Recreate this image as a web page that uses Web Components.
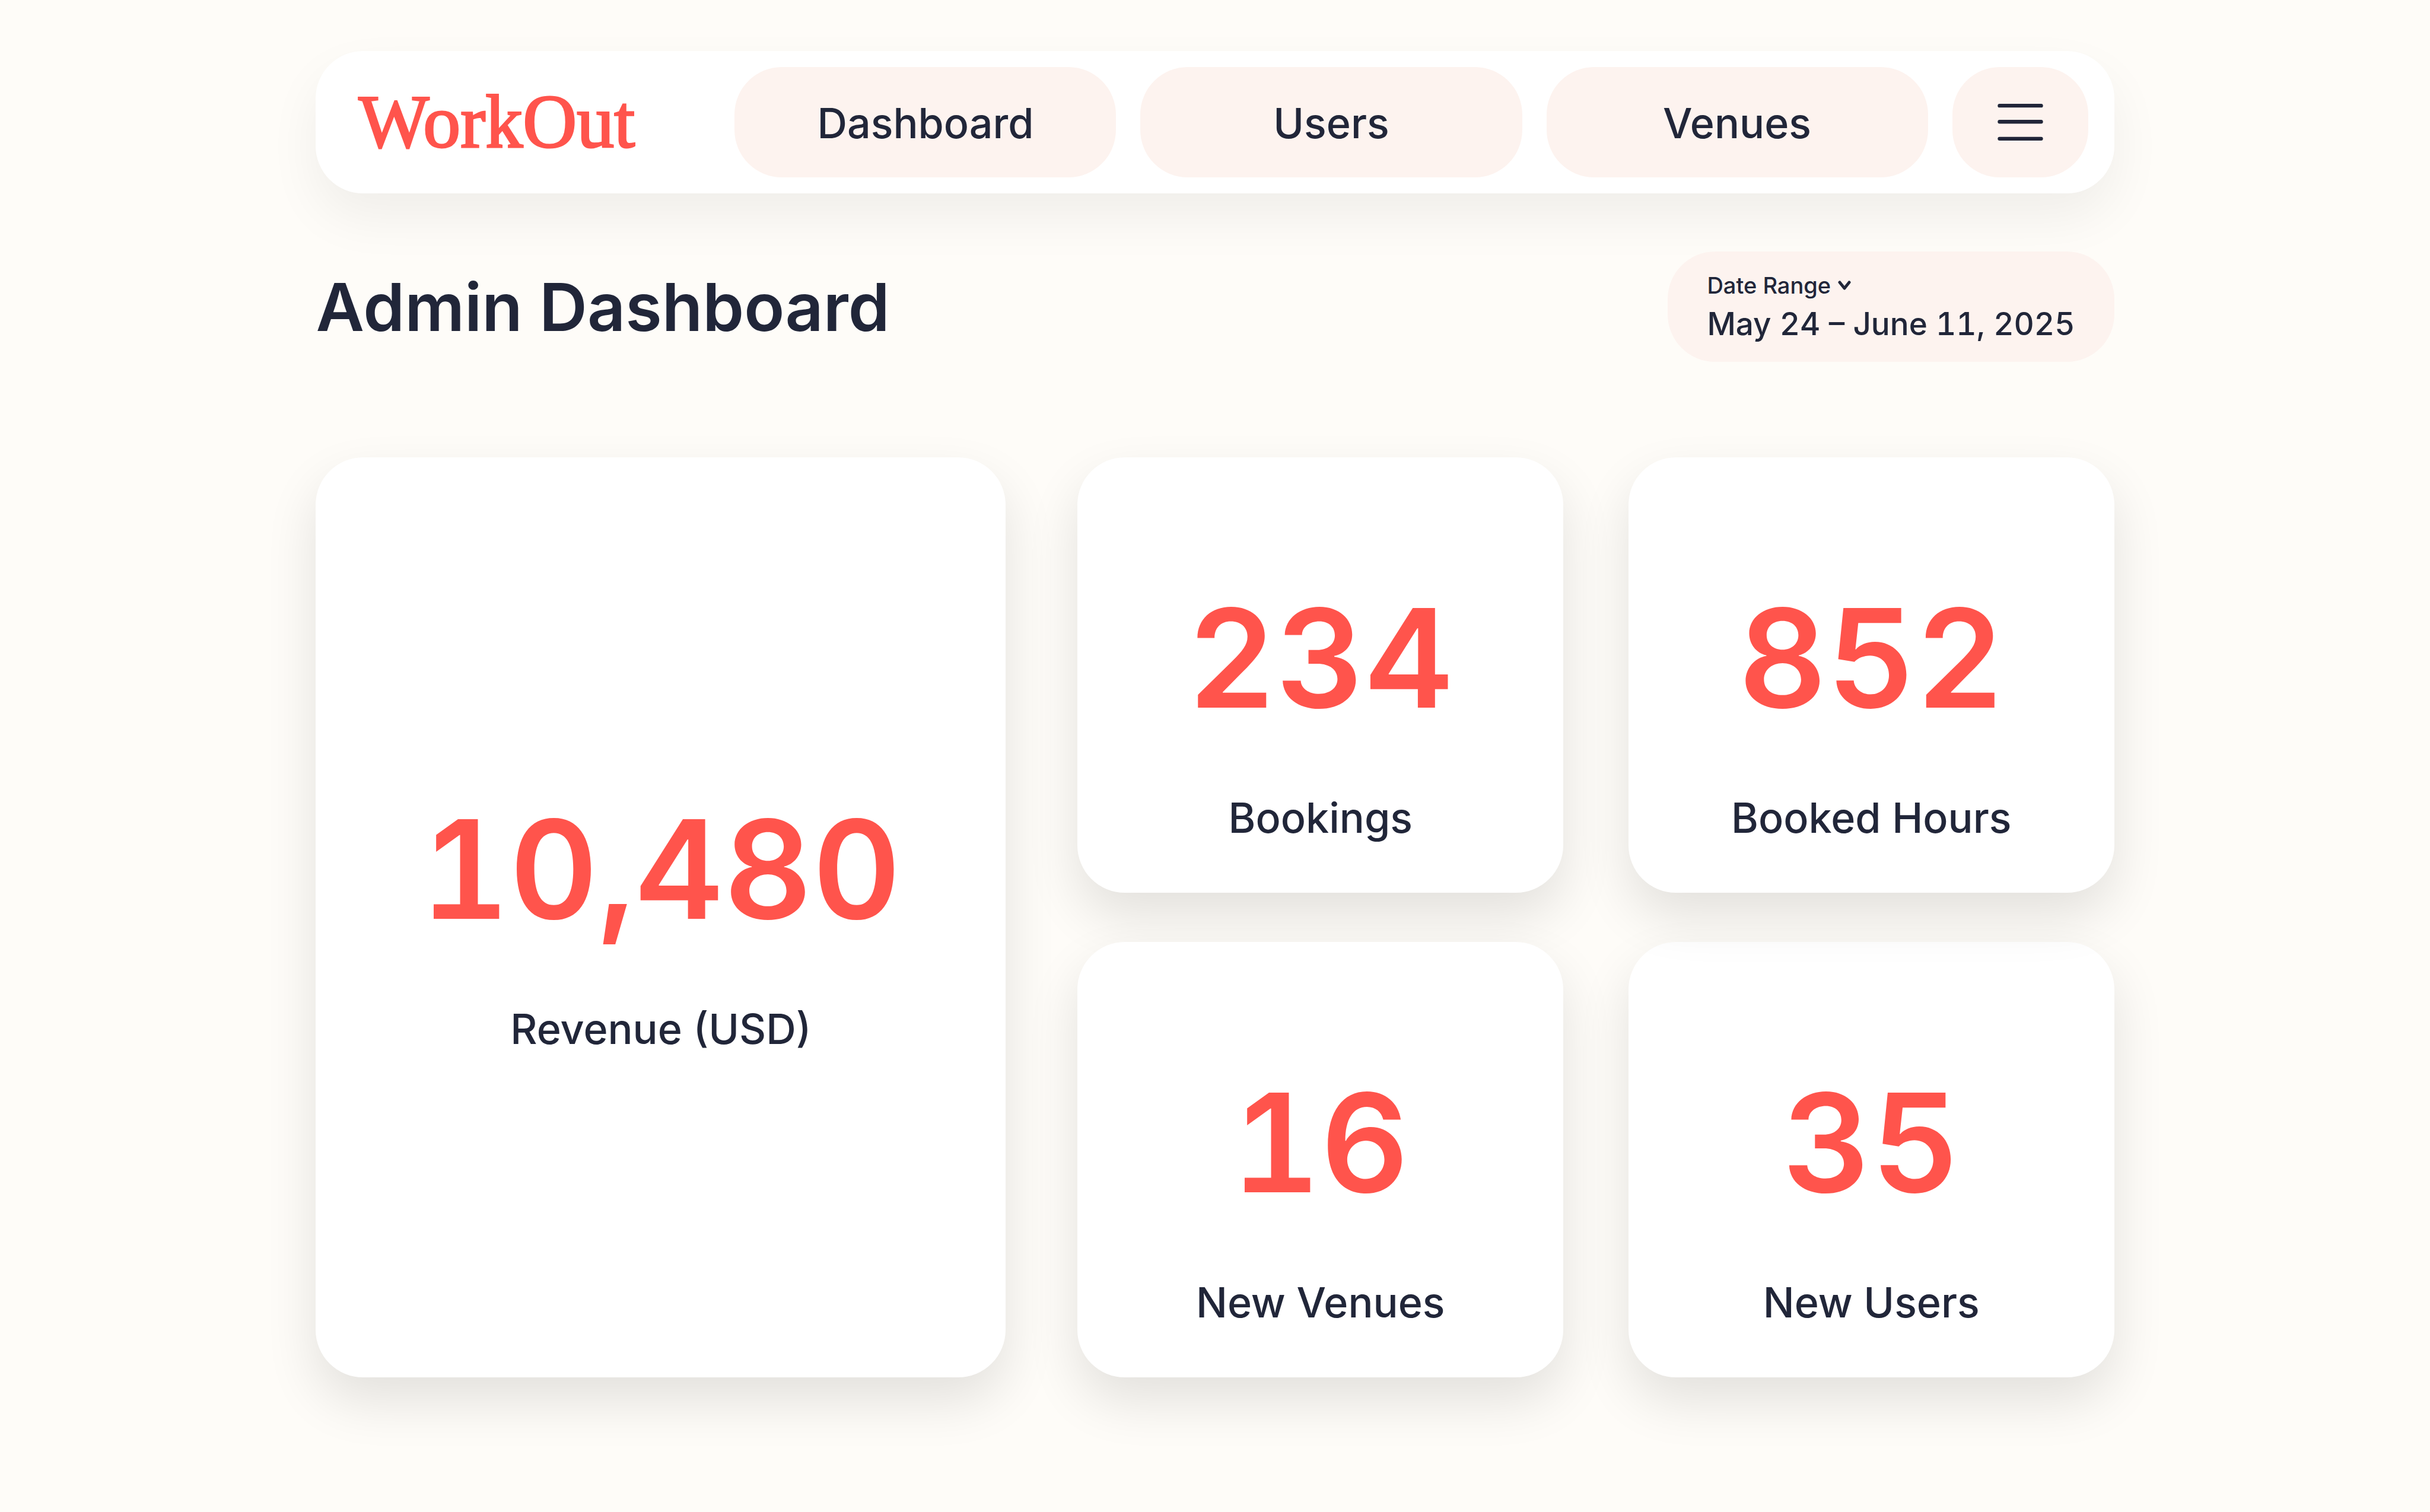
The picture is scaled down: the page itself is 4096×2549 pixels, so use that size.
<!DOCTYPE html>
<html lang="en">
<head>
<meta charset="utf-8">
<meta name="viewport" content="width=device-width, initial-scale=1">
<title>WorkOut – Admin Dashboard</title>
<style>
  :root {
    --page: #fefcf8;
    --surface: #ffffff;
    --tint: #fdf3ef;
    --ink: #212639;
    --accent: #ff544c;
    --radius: 80px;
  }
  body {
    margin: 0;
    background: var(--page);
    color: var(--ink);
    font-family: Inter, "Liberation Sans", sans-serif;
    font-weight: 500;
  }
</style>
</head>
<body>
<admin-page>
  <site-header slot="header">
    <nav-pill href="#dashboard">Dashboard</nav-pill>
    <nav-pill href="#users">Users</nav-pill>
    <nav-pill href="#venues">Venues</nav-pill>
  </site-header>
  <page-heading slot="heading">
    Admin Dashboard
    <date-range slot="tools" label="Date Range">May 24 – June 11, 2025</date-range>
  </page-heading>
  <stat-card large value="10,480">Revenue (USD)</stat-card>
  <stat-card slot="grid" column="1" row="1" value="234">Bookings</stat-card>
  <stat-card slot="grid" column="1" row="2" value="16">New Venues</stat-card>
  <stat-card slot="grid" column="2" row="2" value="35">New Users</stat-card>
  <stat-card slot="grid" column="2" row="1" value="852">Booked Hours</stat-card>
</admin-page>

<script>
  const define = (name, html, setup) => {
    const template = document.createElement('template');
    template.innerHTML = html;
    customElements.define(name, class extends HTMLElement {
      constructor() {
        super();
        this.attachShadow({ mode: 'open' }).append(template.content.cloneNode(true));
      }
      connectedCallback() {
        if (setup) setup(this, this.shadowRoot);
      }
    });
  };

  define('admin-page', `
    <style>
      :host { display: block; }
      .page { width: 74%; margin: 0 auto; padding: 86px 0 226px; }
      main { margin-top: 98px; }
      .stats {
        display: grid;
        grid-template-columns: minmax(0, 1163fr) minmax(0, 1747fr);
        gap: 121px;
        margin-top: 161px;
      }
      .small {
        display: grid;
        grid-template-columns: repeat(2, minmax(0, 1fr));
        gap: 83px 110px;
      }
    </style>
    <div class="page">
      <slot name="header"></slot>
      <main>
        <slot name="heading"></slot>
        <section class="stats" aria-label="Statistics">
          <slot></slot>
          <div class="small"><slot name="grid"></slot></div>
        </section>
      </main>
    </div>`);

  define('site-header', `
    <style>
      :host { display: block; }
      header {
        display: grid;
        grid-template-columns: minmax(0, 593fr) repeat(3, minmax(0, 643fr)) minmax(0, 229fr);
        gap: 41px;
        align-items: center;
        padding: 27px 44px 27px 72px;
        border-radius: var(--radius);
        background: var(--surface);
        box-shadow: 0 40px 88px rgba(0, 0, 0, .06);
      }
      .brand {
        color: var(--accent);
        font: 400 126px/140px "Liberation Serif", serif;
        -webkit-text-stroke: 3px currentColor;
        text-decoration: none;
      }
      nav { display: contents; }
      button {
        display: flex;
        align-items: center;
        justify-content: center;
        height: 186px;
        padding: 0;
        border: 0;
        border-radius: var(--radius);
        background: var(--tint);
        color: inherit;
        cursor: pointer;
      }
      svg { width: 77px; height: 62px; }
    </style>
    <header>
      <a class="brand" href="#home">WorkOut</a>
      <nav><slot></slot></nav>
      <button type="button" aria-label="Menu">
        <svg viewBox="0 0 96 78" fill="currentColor" aria-hidden="true">
          <rect x="0" y="0" width="96" height="8" rx="4"/>
          <rect x="0" y="34" width="96" height="8" rx="4"/>
          <rect x="0" y="70" width="96" height="8" rx="4"/>
        </svg>
      </button>
    </header>`);

  define('nav-pill', `
    <style>
      :host { display: block; }
      a {
        display: flex;
        align-items: center;
        justify-content: center;
        box-sizing: border-box;
        height: 186px;
        padding-top: 4px;
        border-radius: var(--radius);
        background: var(--tint);
        color: inherit;
        font-size: 70px;
        line-height: 84px;
        text-decoration: none;
      }
    </style>
    <a><slot></slot></a>`,
    (host, root) => { root.querySelector('a').href = host.getAttribute('href'); });

  define('page-heading', `
    <style>
      :host { display: flex; align-items: center; justify-content: space-between; }
      h1 { margin: 0; font-size: 112px; line-height: 136px; font-weight: 600; }
    </style>
    <h1><slot></slot></h1>
    <slot name="tools"></slot>`);

  define('date-range', `
    <style>
      :host { display: block; }
      button {
        display: flex;
        flex-direction: column;
        align-items: flex-start;
        gap: 8px;
        padding: 34px 66px 30px;
        border: 0;
        border-radius: var(--radius);
        background: var(--tint);
        color: inherit;
        font: inherit;
        cursor: pointer;
      }
      .label { display: flex; align-items: center; gap: 12px; font-size: 38px; line-height: 46px; }
      .value { font-size: 53px; line-height: 68px; font-variant-numeric: tabular-nums; }
      svg { width: 22px; height: 16px; }
    </style>
    <button type="button" aria-haspopup="dialog">
      <span class="label"><span class="text"></span>
        <svg viewBox="0 0 22 16" fill="none" stroke="currentColor" stroke-width="5" stroke-linecap="round" stroke-linejoin="round" aria-hidden="true">
          <path d="M3 3 11 13 19 3"/>
        </svg>
      </span>
      <span class="value"><slot></slot></span>
    </button>`,
    (host, root) => { root.querySelector('.text').textContent = host.getAttribute('label'); });

  define('stat-card', `
    <style>
      :host {
        display: flex;
        flex-direction: column;
        align-items: center;
        justify-content: flex-end;
        gap: 88px;
        box-sizing: border-box;
        min-height: 734px;
        padding: 84px 40px;
        border-radius: var(--radius);
        background: var(--surface);
        box-shadow: 0 40px 88px rgba(0, 0, 0, .11);
      }
      :host([large]) { justify-content: center; padding: 8px 40px 0; }
      .value {
        color: var(--accent);
        font-size: 231px;
        line-height: 280px;
        font-weight: 600;
        font-variant-numeric: tabular-nums;
      }
      .label { font-size: 70px; line-height: 84px; }
    </style>
    <div class="value"></div>
    <div class="label"><slot></slot></div>`,
    (host, root) => {
      root.querySelector('.value').textContent = host.getAttribute('value');
      if (host.hasAttribute('column')) {
        host.style.gridColumn = host.getAttribute('column');
        host.style.gridRow = host.getAttribute('row');
      }
    });
</script>
</body>
</html>
